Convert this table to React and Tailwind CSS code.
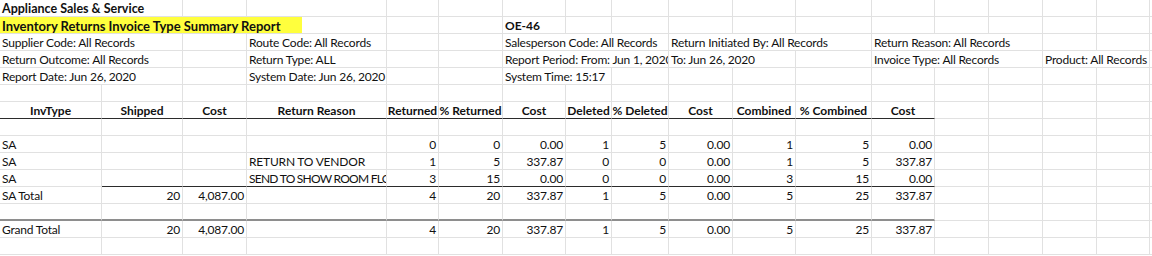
import React from 'react';

const cols = 'grid-cols-[102px_81px_64px_140px_52px_64px_63px_46px_57px_64px_63px_76px_63px_54px_54px_54px_53px_1fr]';
const spans = { 1: 'col-span-1', 2: 'col-span-2', 3: 'col-span-3', 4: 'col-span-4' };
const sizes = { 12.5: 'text-[12.5px]', 13: 'text-[13px]' };
const NCOLS = 18;

const num = (c, vals) => vals.map((v, i) => ({ c: c + i, t: v, r: true }));

const rows = [
  { cells: [{ c: 0, s: 2, t: 'Appliance Sales & Service', b: true, z: 12.5 }] },
  {
    cells: [
      { c: 0, s: 4, t: 'Inventory Returns Invoice Type Summary Report', b: true, hl: true, z: 13 },
      { c: 6, t: 'OE-46', b: true },
    ],
  },
  {
    cells: [
      { c: 0, s: 2, t: 'Supplier Code: All Records' },
      { c: 3, t: 'Route Code: All Records' },
      { c: 6, s: 3, t: 'Salesperson Code: All Records' },
      { c: 9, s: 3, t: 'Return Initiated By: All Records' },
      { c: 12, s: 3, t: 'Return Reason: All Records' },
    ],
  },
  {
    cells: [
      { c: 0, s: 2, t: 'Return Outcome: All Records' },
      { c: 3, t: 'Return Type: ALL' },
      { c: 6, s: 3, t: 'Report Period: From: Jun 1, 2020' },
      { c: 9, s: 2, t: 'To: Jun 26, 2020' },
      { c: 12, s: 3, t: 'Invoice Type: All Records' },
      { c: 15, s: 2, t: 'Product: All Records' },
    ],
  },
  {
    cells: [
      { c: 0, s: 2, t: 'Report Date: Jun 26, 2020' },
      { c: 3, t: 'System Date: Jun 26, 2020' },
      { c: 6, s: 2, t: 'System Time: 15:17' },
    ],
  },
  { cells: [] },
  {
    line: 'dark',
    from: 0,
    cells: ['InvType', 'Shipped', 'Cost', 'Return Reason', 'Returned', '% Returned', 'Cost', 'Deleted', '% Deleted', 'Cost', 'Combined', '% Combined', 'Cost'].map(
      (t, i) => ({ c: i, t, b: true, m: true })
    ),
  },
  { cells: [] },
  { cells: [{ c: 0, t: 'SA' }, ...num(4, ['0', '0', '0.00', '1', '5', '0.00', '1', '5', '0.00'])] },
  {
    cells: [
      { c: 0, t: 'SA' },
      { c: 3, t: 'RETURN TO VENDOR' },
      ...num(4, ['1', '5', '337.87', '0', '0', '0.00', '1', '5', '337.87']),
    ],
  },
  {
    line: 'dark',
    from: 1,
    cells: [
      { c: 0, t: 'SA' },
      // Lato's capitals run wider than the sheet's font; squeeze this one so "FLO" shows
      { c: 3, t: 'SEND TO SHOW ROOM FLOOR', tight: true },
      ...num(4, ['3', '15', '0.00', '0', '0', '0.00', '3', '15', '0.00']),
    ],
  },
  {
    cells: [
      { c: 0, t: 'SA Total' },
      ...num(1, ['20', '4,087.00']),
      ...num(4, ['4', '20', '337.87', '1', '5', '0.00', '5', '25', '337.87']),
    ],
  },
  { line: 'gray', from: 0, cells: [] },
  {
    cells: [
      { c: 0, t: 'Grand Total' },
      ...num(1, ['20', '4,087.00']),
      ...num(4, ['4', '20', '337.87', '1', '5', '0.00', '5', '25', '337.87']),
    ],
  },
  { cells: [] },
];

function Cell({ cell, col, span, line }) {
  let edge = 'border-b border-b-[#e1e1e1]';
  if (line && col <= 12 && col + span - 1 >= line.from) {
    edge = line.kind === 'dark' ? 'border-b border-b-[#2b2b2b]' : 'border-b-2 border-b-[#8e8e8e]';
  }
  const align = cell?.m ? 'justify-center' : cell?.r ? 'justify-end' : 'justify-start';
  let weight = cell?.b ? 'font-bold tracking-normal' : 'tracking-[-0.2px]';
  if (cell?.tight) weight = 'tracking-[-0.75px]';
  return (
    <div
      className={`${spans[span]} ${edge} ${align} ${weight} ${sizes[cell?.z] || ''} flex h-[17px] items-end overflow-hidden whitespace-nowrap border-r border-r-[#e1e1e1] px-[2px] leading-[14px]`}
    >
      {cell?.hl ? (
        <div className="-mx-[2px] -mt-[2px] flex h-[18px] w-[302px] shrink-0 items-end bg-[#ffff3d] px-[2px]">
          {cell.t}
        </div>
      ) : (
        cell?.t
      )}
    </div>
  );
}

function Row({ row }) {
  const out = [];
  let col = 0;
  while (col < NCOLS) {
    const cell = row.cells.find((x) => x.c === col);
    const span = cell?.s || 1;
    out.push(
      <Cell key={col} cell={cell} col={col} span={span} line={row.line ? { kind: row.line, from: row.from } : null} />
    );
    col += span;
  }
  return <>{out}</>;
}

export default function App() {
  return (
    <div className="h-[256px] w-[1152px] overflow-hidden bg-white font-['Lato','Liberation_Sans',sans-serif] text-[12px] text-[#111]">
      <div className={`grid ${cols}`}>
        {rows.map((row, i) => (
          <Row key={i} row={row} />
        ))}
      </div>
    </div>
  );
}
